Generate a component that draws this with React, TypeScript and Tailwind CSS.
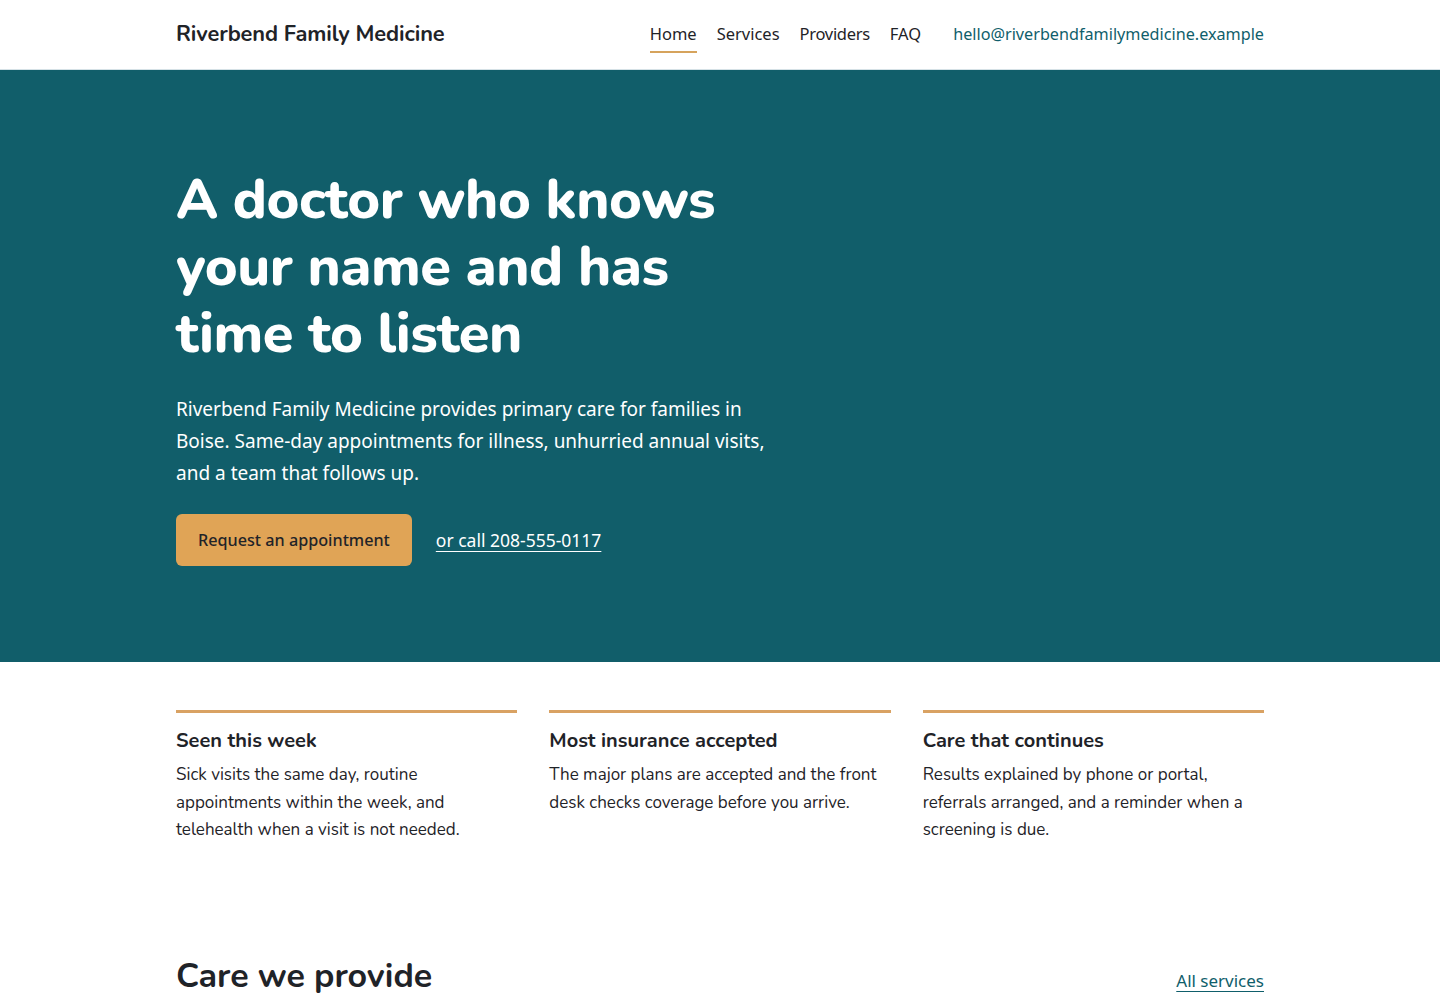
import React from "react";

const features = [
  {
    title: "Seen this week",
    body: "Sick visits the same day, routine appointments within the week, and telehealth when a visit is not needed.",
  },
  {
    title: "Most insurance accepted",
    body: "The major plans are accepted and the front desk checks coverage before you arrive.",
  },
  {
    title: "Care that continues",
    body: "Results explained by phone or portal, referrals arranged, and a reminder when a screening is due.",
  },
];

export default function App() {
  return (
    <div className="min-h-screen bg-white text-[#1f2328] font-['Nunito','Lato','Noto_Sans',sans-serif]">
      <header className="border-b border-[#d5e1e6] bg-white">
        <div className="mx-auto flex h-[69px] w-[1088px] items-center justify-between">
          <div className="text-[21.8px] font-bold tracking-[-0.1px] text-[#1f2328]">Riverbend Family Medicine</div>
          <nav className="flex items-center text-[16.5px] font-['Noto_Sans',sans-serif]">
            <a className="relative mr-[20px] text-[#1f2328]">
              Home
              <span className="absolute left-0 right-0 top-[29px] h-[2px] bg-[#d6a35c]" />
            </a>
            <a className="mr-[20px] text-[#1f2328]">Services</a>
            <a className="mr-[20px] tracking-[-0.3px] text-[#1f2328]">Providers</a>
            <a className="mr-[32px] text-[#1f2328]">FAQ</a>
            <a className="text-[16.2px] text-[#0f5e6b]">hello@riverbendfamilymedicine.example</a>
          </nav>
        </div>
      </header>

      <section className="bg-[#115e6a]">
        <div className="mx-auto w-[1088px] pb-[96px] pt-[96px]">
          <h1 className="max-w-[620px] text-[56px] font-extrabold leading-[67px] tracking-[-0.5px] text-white">
            A doctor who knows your name and has time to listen
          </h1>
          <p className="mt-[26px] max-w-[600px] text-[19px] leading-[32px] text-white font-['Noto_Sans',sans-serif]">
            Riverbend Family Medicine provides primary care for families in Boise. Same-day appointments for illness, unhurried annual visits, and a team that follows up.
          </p>
          <div className="mt-[25px] flex items-center gap-[24px]">
            <button className="h-[52px] rounded-[6px] bg-[#e0a456] px-[22px] text-[16.2px] font-medium text-[#1f2328] font-['Noto_Sans',sans-serif]">
              Request an appointment
            </button>
            <a className="text-[17.5px] text-white underline underline-offset-[4px] font-['Noto_Sans',sans-serif]">or call 208-555-0117</a>
          </div>
        </div>
      </section>

      <section className="mx-auto grid w-[1088px] grid-cols-3 gap-[32px] pt-[48px]">
        {features.map((f) => (
          <div key={f.title} className="border-t-[3px] border-[#d9a263] pt-[13px]">
            <h3 className="text-[20px] font-bold leading-[30px] text-[#1f2328]">{f.title}</h3>
            <p className="mt-[5px] text-[17px] leading-[27.5px] text-[#1f2328]">{f.body}</p>
          </div>
        ))}
      </section>

      <section className="mx-auto mt-[107px] flex w-[1088px] items-baseline justify-between pb-[40px]">
        <h2 className="text-[34px] font-bold text-[#1f2328]">Care we provide</h2>
        <a className="text-[17px] text-[#0f5e6b] underline underline-offset-[4px] font-['Noto_Sans',sans-serif]">All services</a>
      </section>
    </div>
  );
}
